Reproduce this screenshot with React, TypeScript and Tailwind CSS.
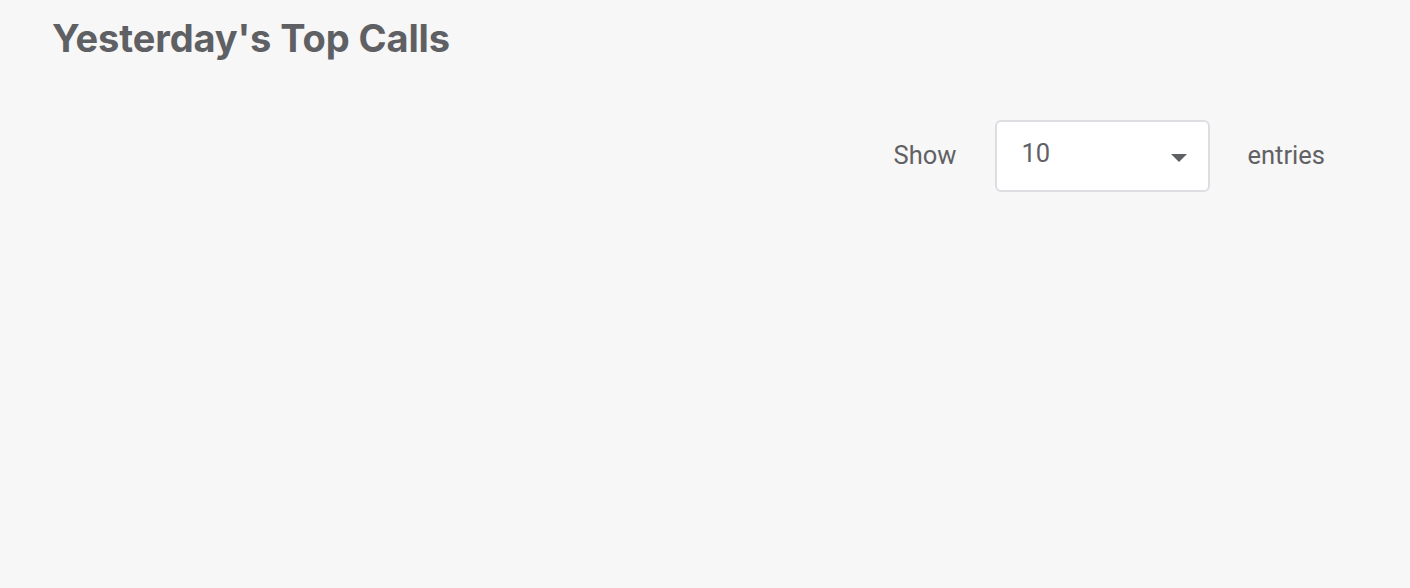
export default function App() {
  return (
    <div className="min-h-screen w-full bg-[#f7f7f7] text-[#616165]" style={{ minHeight: 588 }}>
      <div className="px-[52px] pt-[13px]">
        <h1 className="font-['Inter',sans-serif] text-[38px] font-bold leading-[50px] tracking-[-0.1px] text-[#5f6064]">
          Yesterday's Top Calls
        </h1>
      </div>

      <div className="mt-[57px] flex items-center justify-end pr-[85px] font-['Roboto',sans-serif] text-[25.5px]">
        <span className="-mt-[2px]">Show</span>
        <div className="ml-[38px] mr-[38px] flex h-[72px] w-[215px] items-center justify-between rounded-[6px] border-2 border-[#dedee2] bg-white pl-[25px] pr-[20px]">
          <span className="-mt-[6px]">10</span>
          <svg width="18" height="10" viewBox="0 0 18 10" className="mt-[4px]">
            <path d="M1 1 L17 1 L9 9 Z" fill="#5f6064" />
          </svg>
        </div>
        <span className="-mt-[2px]">entries</span>
      </div>
    </div>
  );
}
